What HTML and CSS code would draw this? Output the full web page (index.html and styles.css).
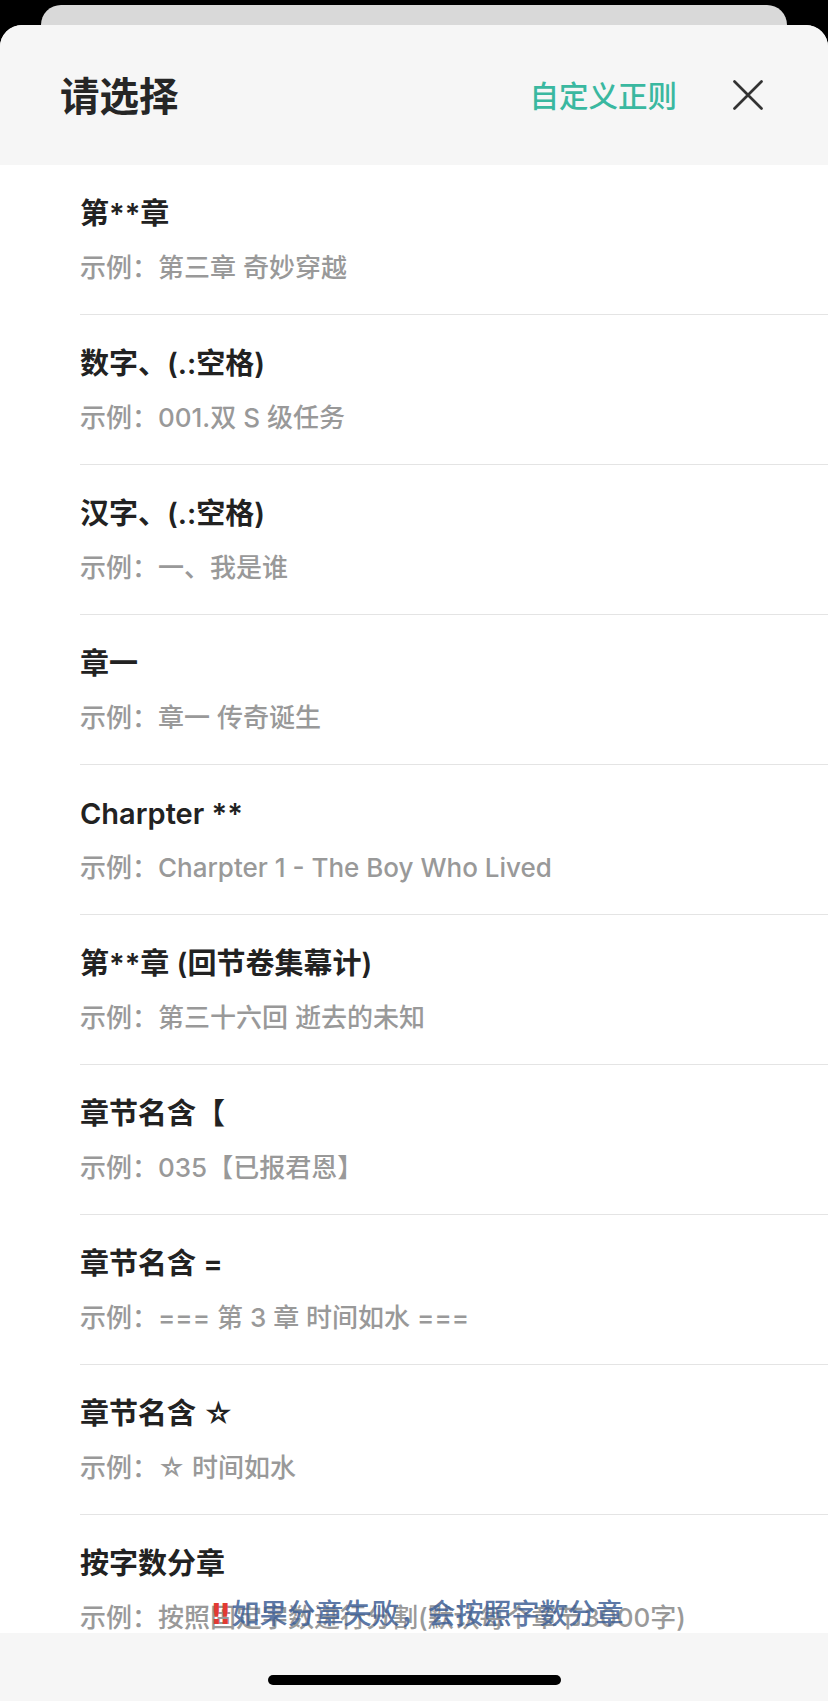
FILE: index.html
```html
<!DOCTYPE html>
<html lang="zh-CN">
<head>
<meta charset="utf-8">
<title>请选择</title>
<link rel="stylesheet" href="styles.css">
</head>
<body>
<div class="screen">
  <div class="backcard"></div>
  <div class="sheet">
    <header class="sheet-head">
      <h1 class="sheet-title">请选择</h1>
      <div class="head-actions">
        <span class="custom-link">自定义正则</span>
        <svg class="close-icon" width="30" height="30" viewBox="0 0 30 30" aria-hidden="true">
          <path d="M1.5 1.5 L28.5 28.5 M28.5 1.5 L1.5 28.5" stroke="#333" stroke-width="2.7" stroke-linecap="round" fill="none"/>
        </svg>
      </div>
    </header>
    <div class="list-wrap">
      <ul class="rule-list">
        <li class="rule"><div class="rule-name">第**章</div><div class="rule-eg">示例：第三章 奇妙穿越</div></li>
        <li class="rule"><div class="rule-name">数字、(.:空格)</div><div class="rule-eg">示例：001.双 S 级任务</div></li>
        <li class="rule"><div class="rule-name">汉字、(.:空格)</div><div class="rule-eg">示例：一、我是谁</div></li>
        <li class="rule"><div class="rule-name">章一</div><div class="rule-eg">示例：章一 传奇诞生</div></li>
        <li class="rule"><div class="rule-name">Charpter **</div><div class="rule-eg">示例：Charpter 1 - The Boy Who Lived</div></li>
        <li class="rule"><div class="rule-name">第**章 (回节卷集幕计)</div><div class="rule-eg">示例：第三十六回 逝去的未知</div></li>
        <li class="rule"><div class="rule-name">章节名含【</div><div class="rule-eg">示例：035【已报君恩】</div></li>
        <li class="rule"><div class="rule-name">章节名含 =</div><div class="rule-eg">示例：=== 第 3 章 时间如水 ===</div></li>
        <li class="rule"><div class="rule-name">章节名含 ☆</div><div class="rule-eg">示例：☆ 时间如水</div></li>
        <li class="rule"><div class="rule-name">按字数分章</div><div class="rule-eg">示例：按照固定字数进行分割(默认每个章节3000字)</div></li>
      </ul>
      <div class="toast"><span class="bang">‼</span>如果分章失败，会按照字数分章</div>
    </div>
    <div class="home-bar"><span class="home-indicator"></span></div>
  </div>
</div>
</body>
</html>
```

FILE: styles.css
```css
html, body {
  margin: 0;
  padding: 0;
  background: #000;
}

body {
  font-family: Inter, "Noto Sans CJK SC", "Noto Sans", sans-serif;
  -webkit-font-smoothing: antialiased;
}

.screen {
  width: 828px;
  height: 1701px;
  display: flex;
  flex-direction: column;
  background: #000;
  overflow: hidden;
  padding-top: 5px;
  box-sizing: border-box;
}

.backcard {
  height: 20px;
  margin: 0 41px;
  background: #d9d9d9;
  border-radius: 20px 20px 0 0;
  flex: none;
}

.sheet {
  flex: 1;
  display: flex;
  flex-direction: column;
  background: #fff;
  border-radius: 22px 22px 0 0;
  overflow: hidden;
  min-height: 0;
}

.sheet-head {
  flex: none;
  height: 140px;
  background: #f6f6f6;
  display: flex;
  align-items: center;
  justify-content: space-between;
  padding: 0 65px 0 60px;
}

.sheet-title {
  margin: 0;
  font-family: "Noto Sans CJK SC", sans-serif;
  font-size: 39.5px;
  font-weight: 600;
  color: #262626;
  line-height: 1;
  position: relative;
  top: -1px;
}

.head-actions {
  display: flex;
  align-items: center;
  gap: 56px;
}

.custom-link {
  font-family: "Noto Sans CJK SC", sans-serif;
  font-size: 29.5px;
  font-weight: 500;
  color: #3ab8a0;
  line-height: 1;
}

.close-icon {
  display: block;
}

.list-wrap {
  flex: 1;
  min-height: 0;
  position: relative;
  overflow: hidden;
  background: #fff;
}

.rule-list {
  list-style: none;
  margin: 0;
  padding: 0 0 0 80px;
}

.rule {
  border-bottom: 1px solid #e4e4e4;
  padding-top: 31px;
  box-sizing: content-box;
  height: 118px;
}

.rule-name {
  font-size: 29px;
  line-height: 36px;
  font-weight: 600;
  color: #222;
}

.rule-eg {
  margin-top: 19px;
  font-size: 26px;
  line-height: 34px;
  font-weight: 500;
  color: #999;
  white-space: nowrap;
}

.toast {
  position: absolute;
  left: 212px;
  bottom: 1px;
  font-family: "Noto Sans CJK SC", sans-serif;
  font-size: 28px;
  line-height: 34px;
  font-weight: 500;
  color: rgba(62, 96, 150, 0.85);
  white-space: nowrap;
}

.bang {
  color: #e23a32;
  font-weight: 700;
  font-family: "DejaVu Sans", sans-serif;
  margin-right: 2px;
}

.home-bar {
  flex: none;
  height: 68px;
  background: #f6f6f6;
  display: flex;
  justify-content: center;
  padding-top: 42px;
  box-sizing: border-box;
}

.home-indicator {
  display: block;
  width: 293px;
  height: 10px;
  border-radius: 5px;
  background: #000;
}
```
